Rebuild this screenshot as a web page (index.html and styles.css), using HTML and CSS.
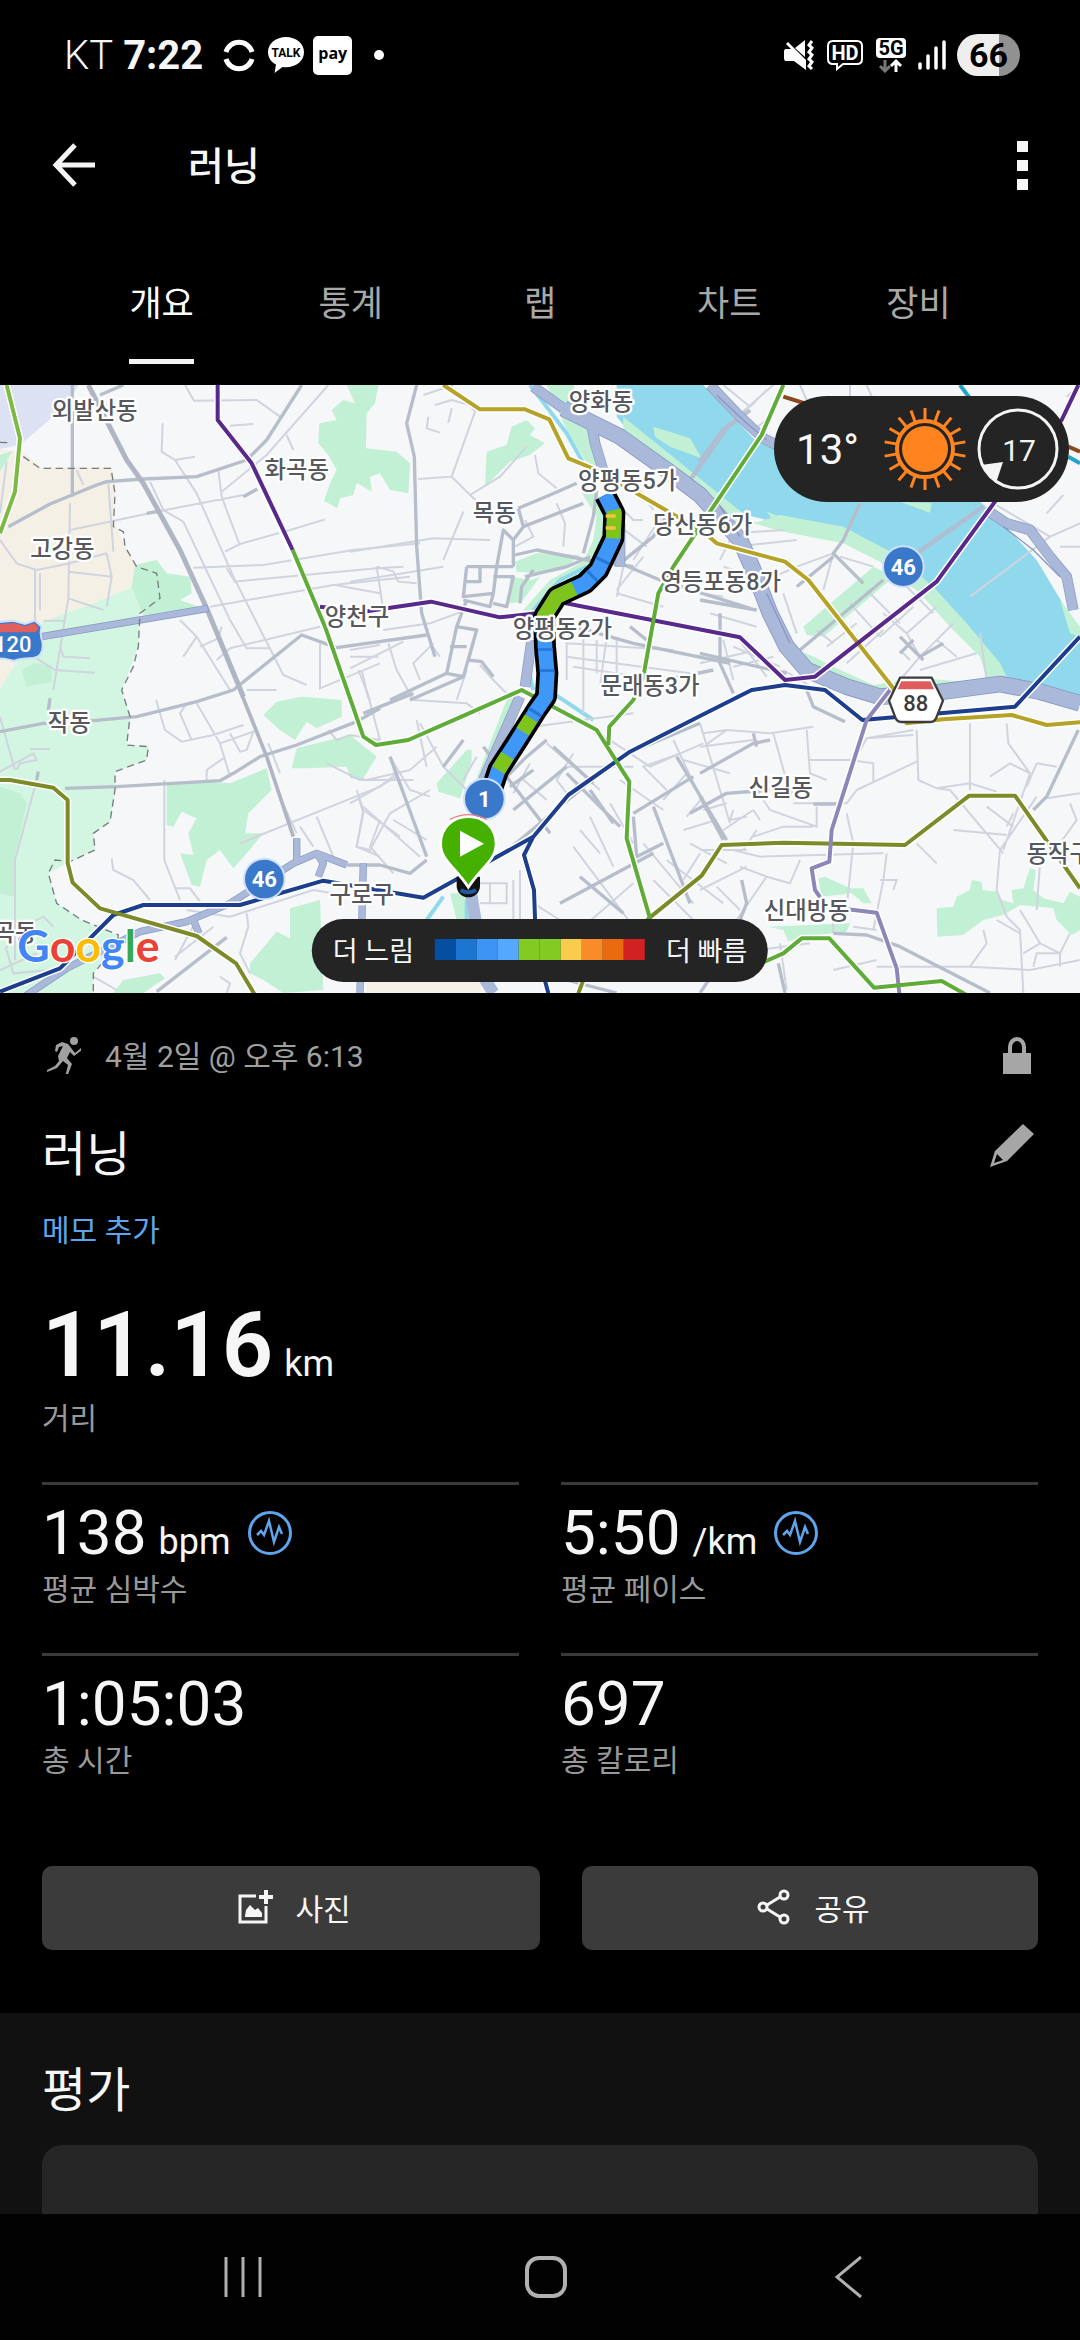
FILE: index.html
```html
<!DOCTYPE html>
<html lang="ko">
<head>
<meta charset="utf-8">
<meta name="viewport" content="width=device-width, initial-scale=1">
<title>러닝</title>
<link rel="stylesheet" href="styles.css">
</head>
<body>
<div class="status">
  <div class="status-left">
    <span class="carrier">KT</span>
    <span class="clock">7:22</span>
    <svg class="ic-sync" width="32" height="34" viewBox="0 0 32 34" fill="none" stroke="#fff" stroke-width="5"><path d="M3 14a13.500 13.500 0 0 1 26 0M3 21a13.500 13.500 0 0 0 26 0"/></svg>
    <svg class="ic-talk" width="38" height="38" viewBox="0 0 38 38"><path d="M19 1C9 1 1 7.500 1 16c0 5.500 3 10 8 12.500L7.500 37l8-6c12 1.500 21.500-5 21.500-15C37 7.500 29 1 19 1z" fill="#fff"/><text x="19" y="21" class="talk-text">TALK</text></svg>
    <span class="pay">pay</span>
    <span class="more-dot"></span>
  </div>
  <div class="status-right">
    <svg width="32" height="32" viewBox="0 0 32 32"><path d="M1 12l1-2h6L3 5l2-2 18 18v10L11 22H2l-1-2zM12 9l10-8v17z" fill="#fff"/><path d="M29 2l-3 4 3 3-3 4 3 3-3 4 3 3-3 4 3 3" fill="none" stroke="#fff" stroke-width="3"/></svg>
    <svg width="38" height="34" viewBox="0 0 38 34"><path d="M7 3h24q5 0 5 5v13q0 5-5 5H17l-6 5v-5H7q-5 0-5-5V8q0-5 5-5z" fill="none" stroke="#fff" stroke-width="2"/><text x="19" y="22" class="hd-text">HD</text></svg>
    <svg width="32" height="36" viewBox="0 0 32 36"><rect x="1" y="1" width="30" height="20" rx="4" fill="#fff"/><text x="16" y="18" class="net-text">5G</text><path d="M10 23v11M5 29l5 5 5-5" fill="none" stroke="#777" stroke-width="3"/><path d="M21 35V24M16 29l5-5 5 5" fill="none" stroke="#fff" stroke-width="3"/></svg>
    <svg width="28" height="32" viewBox="0 0 28 32" stroke="#fff" stroke-width="3.500" stroke-linecap="round"><path d="M2 25v4M10 17v12M18 9v20M26 3v26"/></svg>
    <span class="battery">66</span>
  </div>
</div>

<header class="appbar">
  <button class="icon-btn" aria-label="뒤로"><svg width="44" height="44" viewBox="0 0 44 44" fill="none" stroke="#f4f4f4" stroke-width="5"><path d="M43 22H5M23 2L4 22l19 20"/></svg></button>
  <h1>러닝</h1>
  <button class="icon-btn" aria-label="더보기"><svg width="11" height="49" viewBox="0 0 11 49" fill="#f6f6f6"><path d="M0 0h11v11H0zM0 19h11v11H0zM0 38h11v11H0z"/></svg></button>
</header>

<nav class="tabs">
  <button class="tab active"><span>개요</span></button>
  <button class="tab"><span>통계</span></button>
  <button class="tab"><span>랩</span></button>
  <button class="tab"><span>차트</span></button>
  <button class="tab"><span>장비</span></button>
</nav>

<section class="map">
  <svg class="map-art" viewBox="0 15 3240 1824">
    <rect y="15" width="3240" height="1824" fill="#f6f7f8"/>
    <!-- land use -->
    <path fill="#dce2f4" d="M0 15H235L200 75 60 195 0 207z"/>
    <path fill="#f5f0e6" d="M0 207L65 215 125 262H333L348 300 340 420 375 500 410 560 400 620 280 670 130 725 0 925z"/>
    <path fill="#f5f0e6" d="M1100 1839V1800H1450L1440 1839z"/>
    <path fill="#d2f6e1" d="M0 925L130 725 280 670 400 620 480 655 420 700 415 800 365 930 390 1010 380 1095 445 1100 440 1140 345 1175 345 1230 330 1325 280 1360 285 1410 210 1445 145 1480 170 1570 245 1620 350 1665V1690L280 1780V1839H0z"/>
    <g fill="#c2f0d5">
      <path d="M0 225L38 212 0 275zM405 555L470 540 500 580 570 590 575 640 540 660 600 682 430 705 395 620zM65 870L100 850 155 855V905L80 920z"/>
      <path d="M1040 15H1135L1125 70 1100 100 1098 205 1190 215 1230 250 1225 340 1170 330 1140 280 1110 290 1115 335 1070 308 1060 345 1020 355 1012 385 972 362 990 310 1010 270 985 225 955 190 958 130 1010 120 995 90 1030 60 1065 70z"/>
      <path d="M790 1005L830 965 905 950 1025 960V1010L950 1045 920 1025 885 1080 840 1050zM875 1165L890 1105 1050 1065 1130 1130 1090 1195 1050 1190 1040 1160 920 1165z"/>
      <path d="M500 1215L620 1205 690 1210 800 1165 815 1230 745 1300 735 1360 790 1360 740 1420 700 1465 660 1410 620 1440 600 1520 575 1515 540 1420 580 1425 565 1360 590 1315 545 1295 520 1340 500 1335z"/>
      <path d="M0 1220L60 1240 80 1270 45 1430V1550L0 1540zM750 1750L830 1655 870 1675V1585L960 1560 970 1830 850 1839 790 1800 750 1780zM340 1839L370 1800 480 1780 495 1795 430 1839z"/>
      <path d="M1310 1210L1400 1110H1415V1145L1380 1255 1315 1235zM1455 320L1460 215 1520 195 1535 140 1580 120 1605 145 1590 165 1635 190 1590 225 1530 245zM1545 545L1610 520 1740 525 1690 570 1630 580 1550 575zM1530 590L1595 600 1620 590 1565 665 1525 670z"/>
      <path d="M1740 330L1790 410 1780 480 1750 545 1650 600 1570 690 1605 700 1660 630 1790 555 1830 430 1790 340zM1640 15L1720 15 1760 130 1800 150 1790 260 1760 250 1700 150zM1520 960L1560 930 1470 1150 1420 1220zM1350 1540L1400 1540 1415 1620 1370 1620z"/>
      <path d="M2455 1495L2475 1490 2550 1525H2590L2615 1570H2590L2555 1540 2465 1550zM2305 1640L2550 1630 2540 1655 2400 1670 2365 1685 2350 1650zM2810 1585L2860 1580 2870 1550 2910 1530 2915 1500 2945 1505 2948 1530 2990 1535 3005 1560 3040 1570 3035 1530 3070 1525 3090 1465 3108 1470 3100 1530 3130 1555 3190 1570 3210 1535 3240 1550V1650L3215 1665 3170 1620 3160 1585 3060 1575 3010 1605 2950 1620 2890 1665 2812 1670z"/>
    </g>
    <path fill="#90d9ed" d="M1850 15H2110L2265 180 2330 210 2900 330 2980 400 3110 540 3200 690 3240 760V975L3150 935 3030 900 2960 830 2900 740 2770 600 2660 530 2530 455 2300 420 2195 395 2100 330 1900 170 1850 110z"/>
    <g fill="#c2f0d5">
      <path d="M2260 430L2340 405 2530 440 2680 520 2800 620 2900 730 3000 850 3025 900 2960 895 2940 830 2850 740 2760 640 2640 545 2530 490 2350 455z"/>
      <path d="M2300 395L2380 425 2330 435zM1960 140L2070 175 2105 235 2010 200 1965 170zM2700 365L2790 398 2795 370zM1870 110L2210 385 2270 430 2220 440 1870 170zM3180 660L3240 740V770L3210 760z"/>
      <path d="M2410 740L2620 560 2660 580 2670 600 2470 770 2420 765zM2410 815L2500 860 2620 915 2760 895 2900 905 2890 935 2600 930 2440 880z"/>
    </g>
    <g fill="none" stroke="#90d9ed" stroke-width="12"><path d="M1590 15L1640 80 1700 160 1750 250M1600 690L1680 600 1760 560M1600 930L1580 850M1660 940L1780 1020M1400 1560V1640M1330 1550L1280 1620"/></g>

    <!-- local streets -->
    <g fill="none" stroke="#cfd4df" stroke-width="6">
      <path d="M555 15L582 62 770 60 840 110M488 130L485 215 525 240 585 230M690 137L760 132M985 15L800 225 665 335M860 165L880 210M525 240L590 340 700 590 850 885 920 915M450 305L490 390 550 425 690 720 740 805H810M655 270L665 350 718 492M210 450L470 395 730 345M675 515L720 492 870 450 975 418M580 563L790 555 1060 510 1260 490M700 605L1130 565 1210 560M630 680L1000 615 1230 590M1005 615L1140 640M690 805L960 740M650 840L690 805M680 565L705 605M540 720L590 770 690 930M590 770L550 830M600 800L655 775 665 740M960 790V925L1140 850M1050 810L1140 795M1085 870L1105 955M20 245L0 400M0 480L50 550 110 570 210 550 320 520M105 570V720M210 370L205 655 160 930M205 575L335 590 320 520M335 590L320 680M205 655L310 690M130 722H195M325 310L340 515M120 580V690M180 800L190 830 270 835M110 835L165 870 285 878M230 270L250 315"/>
      <path d="M0 1010L45 1170M0 1175L100 1120 110 1140 60 1150 50 1170M90 1107H150M110 1200L45 1440V1740M468 960L495 1050 545 1085 640 1065 730 1035M590 970L660 1090 690 1190M560 970L540 1000 575 1080M660 1090L760 1055 740 1110 720 1115 690 1060M620 1200V1170L670 1135M805 1090L840 1180M740 930L830 930M1100 930L1140 1080 1050 1065 1010 1080 985 1050M980 1150L1080 1200 1240 1200M830 1230L890 1360M720 1390L1140 1220 1190 1180M493 1200V1440L540 1560M335 1435L340 1470 400 1500 450 1560M950 1310L1000 1430M1075 1250L1090 1300 1070 1400 1140 1430M1090 1290L1200 1370M900 1340L940 1400M530 1525H570L600 1565M560 1590L690 1610 940 1530 1000 1540M740 1600L745 1640 720 1720 750 1780M525 1730L640 1640M600 1600L525 1740M660 1790L690 1810 680 1839M15 1710L50 1650 130 1610 160 1640M20 1710L40 1780 150 1770M0 1770L110 1720M280 1790L350 1830"/>
      <path d="M1360 15L1270 45M1305 75L1355 60 1410 75 1425 95 1355 290 1255 297M1345 128L1355 85M1285 110L1280 145 1320 158M1355 290L1410 345 1500 290 1580 200M1410 345L1450 380M1605 225L1615 280 1670 325M1575 420L1600 470 1545 500M1670 370L1695 430 1690 500M1050 515L1300 475 1470 480M1390 395L1330 540M1050 605L1330 560M1130 560L1150 690M1130 560L1180 575 1195 605 1250 610M1150 750L1290 730 1400 690M1050 865L1210 785M1165 790L1190 870 1240 960M1300 790L1240 850 1260 900M1075 870L1110 960M1050 830H1135M1290 790L1320 830M1400 870L1370 960M1440 855L1480 900 1530 950M1700 790L2020 810M1700 830L2070 880M1720 860L1980 900M1700 770V900M1750 750V1000M1790 780V880M1820 770L1800 920M1850 780V900M1660 740L1640 800M1850 640L1990 680M1850 650L1870 560M1850 630L1930 530M1990 400L1900 540M1960 390L1920 330M1860 440L1940 500M1870 390L1900 420 1930 420"/>
      <path d="M1050 1190L1100 1200 1230 1170 1310 1100M1170 1130L1230 1230 1290 1250M1050 1270L1190 1190M1070 1230L1090 1290 1070 1400 1110 1410 1170 1300 1290 1230M1090 1280L1260 1430M1180 1320L1280 1380M1140 1320L1110 1400 1180 1480M1430 1130L1390 1200M1260 1030L1330 1160 1400 1230M1250 1020L1280 1160M1240 960L1400 970 1440 1000M1600 1040L1900 1000M1640 1090L1800 1230M1720 1120L1670 1200 1700 1240M1560 1190L1640 1260M1590 1150L1540 1240M1700 1160L1900 1160M1500 1430L1560 1390M1800 1060L1950 1160 2110 1090M2020 1080L2100 1250M2000 1230L1930 1160 2040 1120M1860 1200L1990 1290M2060 1180L1990 1260M2050 1140L2190 1180M2110 1250L2060 1310M1830 1270L1900 1390M1770 1310L1840 1460M1740 1350L1800 1420M1720 1400L1900 1640M1750 1640L1900 1510M1600 1570L1680 1620M1560 1470V1620M1540 1500V1640M1420 1510H1520V1570H1440M1470 1510V1570M1930 1390L2080 1570M2050 1350L2150 1320M2070 1390L2180 1450M2000 1440L2170 1570M1960 1500L2080 1620M2100 1420L2050 1500"/>
      <path d="M2100 1030L2190 1330M2110 1060L2180 1050 2310 1060 2440 1040M2180 1050L2110 1100M2100 1100L2260 1080M2420 1050L2430 1180 2480 1200M2430 1140H2550L2620 1150 2620 1210M2550 1140L2570 1130 2600 1075 2740 1065M2600 1075L2740 1050M2570 1230L2750 1145M2570 1230L2540 1270H2380M2750 1050L2755 1200 2810 1225 2910 1210 2990 1235M2910 1030V1230M3020 1030L3025 1090 3090 1180M2970 1190L3030 1150 3090 1180 3010 1410M3110 1150L3170 1160M3110 1150L3080 1220M3140 1255L3240 1240M3000 1410L2990 1530 3020 1610 3060 1650 3070 1839M3000 1410L3110 1250M2810 1225L2850 1230 3010 1420M2860 1350L3020 1365M2960 1280L3040 1340M3040 1300L3020 1340M3210 1270L3230 1320 3180 1390M2540 1300L2560 1390 2540 1580M2270 1230L2310 1290 2450 1340V1280M2320 1060L2370 1240 2430 1200M2180 1270L2110 1290M2200 1290L2190 1320 2240 1310M2170 1350L2260 1290M2260 1290L2280 1320M2230 1410L2270 1350M2260 1370L2350 1340H2440M2240 1410H2100M2200 1410L2280 1430 2650 1420M2660 1420L2650 1500 2620 1650M2640 1500H2690L2680 1530M2750 1390L2810 1450M2400 1440L2370 1510 2300 1490 2210 1620M2300 1490L2220 1460M2240 1460L2100 1530M2150 1520L2220 1590M2100 1770L2200 1720 2430 1690M2340 1690L2360 1830M2500 1770L2630 1740M2630 1760L2910 1760 3090 1770 3240 1740M2910 1760L2960 1690 2950 1650M3060 1590L3120 1690 3180 1720V1760M3120 1690L3070 1720M3180 1720H3110L3100 1760M3180 1720L3210 1660M3060 1660L2990 1620M3120 1450L3110 1590M2500 1620V1660M2560 1640L2630 1650"/>
      <path d="M2170 15L2250 80 2300 30M2200 120L2320 15M2260 150L2300 120M2400 15L2420 60M2550 15V60M2600 15L2620 60M2980 370L3150 470 3240 430M3150 470L2910 650M3180 500H3240M3190 345L3140 400M3240 15L3200 50M2160 540L2200 460 2350 450M2170 560L2290 600M2200 500L2390 480M2290 600L2260 640M2300 600L2390 560 2500 520M2390 760L2350 640M2520 530L2620 560M2350 870L2450 930M2500 520L2470 630M2450 750L2500 790M2500 710L2590 800M2550 670L2640 770M2600 630L2700 730M2480 800L2570 730M2540 850L2650 750M2700 600L2800 700M2740 680L2640 770M2720 760L2760 830M2760 830L2860 730M2760 830L2700 900M2700 810L2730 840M2810 780L2870 830M2760 870L2930 820M2940 760L2960 900M2650 700L2720 760 2810 680M2100 640L2170 650M2130 700L2270 740M2170 780L2200 900M2200 800L2340 860M2100 850L2270 810M2200 860L2320 830M2210 770L2300 890"/>
    </g>
    <!-- arterial roads -->
    <g fill="none" stroke="#b6bdcb" stroke-width="10" stroke-linejoin="round">
      <path d="M217 15V350M25 440L150 372M150 372L290 315 320 305 430 297 590 290 740 240 800 180 905 15M300 45L370 15M440 400L480 393M730 350L772 327M0 1055L130 1030 280 1022 410 1010 590 965 700 930 905 765 1010 803 1280 765M195 1225L350 1220 660 1202 700 1180 780 1130 890 1095 1070 1025 1140 985M470 1835L680 1672M1040 1455H1140L1230 1480 1280 1440M110 1200L115 1175M150 955L145 990"/>
      <path d="M1250 15L1220 130 1243 230 1250 500 1265 700 1305 830M1555 385L1650 345 1730 310M1570 440L1750 370M1555 385L1570 440 1540 480 1510 450 1490 560 1540 560M1490 560L1480 640M1540 480V560M1400 560H1500M1400 560L1390 650 1480 640 1470 680 1390 660M1400 605H1440V560M1480 590H1540L1520 680 1480 670M1400 660L1370 740 1430 750 1405 840M1370 740L1340 880 1390 890 1430 750M1340 880L1170 960M1390 890L1230 960M1350 800H1400M1405 840L1445 845 1480 890M1545 525L1610 510 1760 540 1900 560M1575 590L1700 560 1770 530M1600 570L1565 620 1560 670M1790 330L1780 410 1750 520M1860 550L1960 470 2010 390M1860 550L1980 600 2250 685M1690 730L1900 790 2190 850M2160 700L2160 850 2200 940M1890 740L1940 780M1900 920L2140 870"/>
      <path d="M1090 1000L1240 940M1170 1130L1280 1430M1330 1160L1390 1080M1450 1100L1620 1320 1650 1360M1500 1210L1580 1130 1640 1080M1500 1430L1740 1230 1860 1130 2100 1030M1540 1290L1700 1160M1530 1220L1600 1170M1660 1100L1780 1210M1700 1180L1860 1340M1770 1230L1840 1330M1680 1570L1960 1420M1740 1490L1870 1600M1900 1300L2080 1190M1900 1310L1910 1430 1990 1390M2030 1130L2180 1380M1960 1280L2070 1570M2070 1300L2180 1240 2310 1230M2100 1180L2260 1090 2310 1080M2100 1250L2170 1380M2420 930L2440 980 2535 1025M2260 1060L2270 1100M2440 1272H2510M2225 1500L2240 1570 2220 1620M2335 1750L2355 1839M2500 1660L2600 1665 2700 1700 2970 1839M3235 1050L3140 1250 3100 1290M1700 1800L1850 1839M2100 1839L2140 1780"/>
      <path d="M2580 370L2530 480 2500 520 2590 610M2390 620L2500 530M2400 810L2650 600M2700 770L2770 840M2740 780L2700 820M2760 830L2830 790M2100 660L2270 690M2100 820L2360 880"/>
    </g>
    <g fill="none" stroke="#afb5c3" stroke-width="18"><path d="M265 15L380 240 430 310 540 510 620 685 730 950" stroke-width="15"/><path d="M720 930L800 1130 880 1370" stroke-width="11"/></g>
    <path fill="none" stroke="#b7b6c8" stroke-width="14" opacity=".8" d="M2100 245L2170 150 2250 90M2750 520L2950 380M2190 130L2070 300"/>
    <!-- expressways -->
    <g fill="none" stroke="#8698c4" stroke-linejoin="round">
      <path stroke-width="50" d="M1690 85L1780 130 1860 170 2000 270 2100 345 2220 480 2260 570 2310 700 2360 800 2420 870 2540 920 2640 950 2790 940 3000 912 3120 935 3240 970"/>
      <path stroke-width="32" d="M1600 20L1690 85M1770 110L1785 190 1815 290M2130 15L2220 110 2290 175 2330 195M2960 390L3020 430 3090 450 3150 530 3200 590 3220 690M1860 430V560M1595 780L1575 920M1560 950L1490 1110 1450 1200"/>
      <path stroke-width="22" d="M125 770L625 685M60 1859L200 1765 420 1655 560 1625 690 1570 880 1450 950 1420 1040 1455M890 1375V1440M580 1620L597 1660M950 1420L970 1450 955 1490M1090 1450L1080 1839M1410 1530L1430 1630M1450 1800L1480 1839"/>
    </g>
    <g fill="none" stroke="#aab9d9" stroke-linejoin="round">
      <path stroke-width="45" d="M1690 85L1780 130 1860 170 2000 270 2100 345 2220 480 2260 570 2310 700 2360 800 2420 870 2540 920 2640 950 2790 940 3000 912 3120 935 3240 970"/>
      <path stroke-width="28" d="M1600 20L1690 85M1770 110L1785 190 1815 290M2130 15L2220 110 2290 175 2330 195M2960 390L3020 430 3090 450 3150 530 3200 590 3220 690M1860 430V560M1595 780L1575 920M1560 950L1490 1110 1450 1200"/>
      <path stroke-width="18" d="M127 770L623 685M60 1859L200 1765 420 1655 560 1625 690 1570 880 1450 950 1420 1040 1455M890 1375V1440M580 1620L597 1660M950 1420L970 1450 955 1490M1090 1450L1080 1839"/>
      <path stroke-width="36" d="M1410 1520L1430 1640M1450 1790L1480 1839"/>
    </g>
    <path fill="none" stroke="#8698c4" stroke-width="4" d="M2150 45L2240 130 2300 180M3010 440L3100 510 3180 590M2160 380L2220 470M2300 640L2370 790"/>
    <!-- city boundary -->
    <path fill="none" stroke="#777c80" stroke-width="4" stroke-dasharray="22 14" d="M0 187L30 188M70 230L120 265H333L345 340 340 440 370 455 375 500 410 560 470 580 480 655 420 700 415 800 400 860 365 930 390 1010 380 1095 445 1100 440 1140 345 1175 345 1230 330 1325 280 1360 285 1410 210 1445 165 1440 145 1480 170 1570 245 1620 355 1665 350 1700 280 1780V1839"/>

    <!-- transit lines: white casing, then colour -->
    <g class="casing">
      <path d="M20 15L60 175 45 335 0 460M653 15V120L755 250 975 740 1045 940 1090 1070 1128 1095 1225 1080 1400 1003 1565 930 1790 1050 1888 1205 1880 1375 1950 1615M2350 15L2285 165 2130 395 2020 560 1975 640 1930 890 1900 960 1828 1040 1825 1095M960 680L1090 695 1293 665 1500 712 1610 700 1690 668 2220 772 2355 900 2445 890 2810 605 2985 365 3185 120 3235 15M1330 15L1440 88H1575L1648 118 1705 235 1790 270 1910 340 2110 455 2150 490 2355 545 2425 600 2680 925 2720 1030 2830 1018 3035 1005 3140 1035 3240 1027M0 1835L180 1765 340 1605 430 1575H720L970 1502 1270 1553 1600 1370 1705 1245 1890 1115 2100 1008 2255 930 2355 915 2475 930 2587 1020 3045 980 3240 770M1600 1370L1572 1425 1602 1530 1608 1700 1645 1840M0 1200H30L160 1223 203 1260V1450L218 1508 300 1585 590 1668 708 1750 765 1845M1735 1840L1750 1800 1950 1612 2105 1487 2165 1395 2350 1388 2715 1395 2908 1247H3045L3240 1525M2670 930L2600 1020 2495 1350 2488 1445 2435 1465 2445 1530 2480 1580 2630 1598 2690 1765 2698 1840M2260 1760L2350 1720 2405 1675H2488L2622 1823 2825 1803 2900 1845"/>
    </g>
    <g class="line">
      <path stroke="#7dba45" d="M20 15L60 175 45 335 0 460"/>
      <path stroke="#8a4a1d" d="M2350 50L2430 75M3205 200L3240 215"/>
      <path stroke="#20a5c8" d="M2880 15L2910 55M3205 230L3240 250"/>
      <path stroke="#b5a226" d="M1330 15L1440 88H1575L1648 118 1705 235 1790 270 1910 340 2110 455 2150 490 2355 545 2425 600 2680 925 2720 1030 2830 1018 3035 1005 3140 1035 3240 1027"/>
      <path stroke="#58298a" d="M653 15V120L755 250 878 510M960 680L1090 695 1293 665 1500 712 1610 700 1690 668 2220 772 2355 900 2445 890 2810 605 2985 365 3185 120 3235 15"/>
      <path stroke="#1c3e8c" d="M0 1835L180 1765 340 1605 430 1575H720L970 1502 1270 1553 1600 1370 1705 1245 1890 1115 2100 1008 2255 930 2355 915 2475 930 2587 1020 3045 980 3240 770M1600 1370L1572 1425 1602 1530 1608 1700 1645 1840"/>
      <path stroke="#7d8a28" d="M0 1200H30L160 1223 203 1260V1450L218 1508 300 1585 590 1668 708 1750 765 1845M1735 1840L1750 1800 1950 1612 2105 1487 2165 1395 2350 1388 2715 1395 2908 1247H3045L3240 1525"/>
      <path stroke="#8d87b9" d="M2670 930L2600 1020 2495 1350 2488 1445 2435 1465 2445 1530 2480 1580 2630 1598 2690 1765 2698 1840"/>
      <path stroke="#5fac38" d="M878 510L975 740 1045 940 1090 1070 1128 1095 1225 1080 1400 1003 1565 930 1790 1050 1888 1205 1880 1375 1950 1615M2350 15L2285 165 2130 395 2020 560 1975 640 1930 890 1900 960 1828 1040 1825 1095M2260 1760L2350 1720 2405 1675H2488L2622 1823 2825 1803 2900 1845"/>
    </g>

    <!-- recorded track -->
    <g fill="none" stroke-linejoin="round">
      <path stroke="#000" stroke-width="66" d="M1815 345L1843 400 1840 475 1795 570 1755 610 1670 650 1632 710 1635 800 1642 880 1638 950 1610 990 1550 1085 1495 1170 1478 1220"/>
      <path stroke="#3f97f7" stroke-width="44" d="M1815 345L1843 400 1840 475 1795 570 1755 610 1670 650 1632 710 1635 800 1642 880 1638 950 1610 990 1550 1085 1495 1170 1478 1220"/>
      <path stroke="#7fc41c" stroke-width="44" d="M1841 390L1843 400 1840 475M1723 625L1670 650 1632 710 1633 745M1593 1015L1568 1055M1522 1127L1495 1170"/>
      <path stroke="#2576d6" stroke-width="44" d="M1810 538L1806 546M1780 585L1774 591M1637 805V812M1641 868V876M1607 992L1602 1000"/>
      <path stroke="#f2c63c" stroke-width="10" d="M1817 408H1847M1817 444H1847"/>
    </g>
    <path d="M1370 1490v27a35 35 0 0 0 70 0v-27z" fill="#111"/>
    <path d="M1382 1530q22 14 46 0" fill="none" stroke="#235a9c" stroke-width="12"/>

    <!-- district names -->
    <g class="place">
      <text x="284" y="116">외발산동</text><text x="890" y="294">화곡동</text><text x="187" y="532">고강동</text>
      <text x="1071" y="734">양천구</text><text x="1803" y="91">양화동</text><text x="1483" y="422">목동</text>
      <text x="1883" y="328">양평동5가</text><text x="2108" y="459">당산동6가</text><text x="2162" y="631">영등포동8가</text>
      <text x="1687" y="771">양평동2가</text><text x="1950" y="941">문래동3가</text><text x="208" y="1052">작동</text>
      <text x="1085" y="1570">구로구</text><text x="2342" y="1248">신길동</text><text x="2420" y="1616">신대방동</text>
      <text x="3176" y="1447">동작구</text><text x="45" y="1683">곡동</text>
    </g>

    <!-- road numbers -->
    <g class="badge">
      <circle cx="2710" cy="560" r="61"/><text x="2710" y="584">46</text>
      <circle cx="793" cy="1497" r="61"/><text x="793" y="1521">46</text>
      <circle cx="1453" cy="1257" r="61"/><text x="1453" y="1281">1</text>
    </g>
    <path d="M-15 727L40 722 75 732 105 722 125 740Q118 760 127 785 134 835 90 835 60 835 42 843 20 835-20 835z" fill="#3a78c9" stroke="#cfe0fb" stroke-width="6"/>
    <path d="M-15 734L40 729 75 739 103 730 116 742 108 757H-15z" fill="#e0605e"/>
    <text class="shield" x="38" y="815">120</text>
    <path d="M2700 893H2795L2829 962 2808 1015Q2803 1026 2792 1026H2703Q2692 1026 2687 1015L2667 962z" fill="#fff" stroke="#3c3c3c" stroke-width="7" stroke-linejoin="round"/>
    <path d="M2704 904H2791L2802 928H2693z" fill="#de5c5c"/>
    <text class="hex" x="2747" y="994">88</text>

    <!-- start pin -->
    <path d="M1405 1310c-48 0-83 34-83 82 0 50 47 72 83 130 36-58 83-80 83-130 0-48-35-82-83-82z" fill="#45b000" stroke="#fff" stroke-width="8"/>
    <path d="M1380 1352L1452 1391 1380 1430z" fill="#fff"/>
    <path d="M1350 1318q55-28 110 0" fill="none" stroke="#ee7b86" stroke-width="4"/>

    <text class="google" x="52" y="1746"><tspan fill="#4285f4">G</tspan><tspan fill="#ea4335">o</tspan><tspan fill="#fbbc05">o</tspan><tspan fill="#4285f4">g</tspan><tspan fill="#34a853">l</tspan><tspan fill="#ea4335">e</tspan></text>
  </svg>

  <div class="weather">
    <span class="temp">13°</span>
    <svg width="82" height="82" viewBox="-41 -41 82 82" stroke="#ff841f" fill="none"><circle r="23" fill="#ff841f" stroke="none"/><circle r="28" stroke-width="4"/>
      <g stroke-width="3"><path d="M0-28V-41M0 28V41"/><path d="M0-28V-41M0 28V41" transform="rotate(20)"/><path d="M0-28V-41M0 28V41" transform="rotate(40)"/><path d="M0-28V-41M0 28V41" transform="rotate(60)"/><path d="M0-28V-41M0 28V41" transform="rotate(80)"/><path d="M0-28V-41M0 28V41" transform="rotate(100)"/><path d="M0-28V-41M0 28V41" transform="rotate(120)"/><path d="M0-28V-41M0 28V41" transform="rotate(140)"/><path d="M0-28V-41M0 28V41" transform="rotate(160)"/></g></svg>
    <svg width="82" height="82" viewBox="-41 -41 82 82"><circle r="39" fill="none" stroke="#f4f4f4" stroke-width="3"/><path d="M-37 16L-15 13-22 34z" fill="#f4f4f4"/><text class="wind" x="1" y="12">17</text></svg>
  </div>

  <div class="legend">
    <span>더 느림</span>
    <div class="scale"><i class="s1"></i><i class="s2"></i><i class="s3"></i><i class="s4"></i><i class="s5"></i><i class="s5"></i><i class="s6"></i><i class="s7"></i><i class="s8"></i><i class="s9"></i></div>
    <span>더 빠름</span>
  </div>
</section>

<main class="summary">
  <div class="meta">
    <svg width="34" height="38" viewBox="0 0 34 38" fill="#a0a0a0"><circle cx="27" cy="5" r="4"/><path d="M21 8L15 6 9 9 8 15l2 1 2-5 4-1-5 10 1 5-4 5-8 4v2l10-4 6-7 5 4-3 12h2l5-13-5-6 3-6 4 4 8-6-1-2-6 5z"/></svg>
    <span class="date">4월 2일 @ 오후 6:13</span>
    <svg class="push" width="28" height="37" viewBox="0 0 28 37"><path d="M0 16h28v21H0z" fill="#a6a6a6"/><path d="M7 17V10a7 8 0 0 1 14 0v7" fill="none" stroke="#a6a6a6" stroke-width="4"/></svg>
  </div>
  <div class="title-row">
    <h2>러닝</h2>
    <button class="icon-btn edit" aria-label="이름 편집"><svg width="46" height="46" viewBox="0 0 46 46" fill="#a6a6a6"><path d="M34 2L45 12 18 39 1 45 6 29zM8 32L5 41 14 38z" fill-rule="evenodd"/></svg></button>
  </div>
  <a class="memo" href="#memo">메모 추가</a>

  <div class="distance"><b>11.16</b> <span class="unit">km</span></div>
  <div class="label">거리</div>

  <div class="stats">
    <div class="stat"><div class="value">138 <span class="unit">bpm</span><svg class="pulse" width="46" height="46" viewBox="0 0 46 46" fill="none" stroke="#5fa5ee"><circle cx="23" cy="23" r="20.500" stroke-width="3"/><path d="M10 25l4-4 3 4 5-14 5 21 5-15 3 7" stroke-width="2.500"/></svg></div><div class="label">평균 심박수</div></div>
    <div class="stat"><div class="value">5:50 <span class="unit">/km</span><svg class="pulse" width="46" height="46" viewBox="0 0 46 46" fill="none" stroke="#5fa5ee"><circle cx="23" cy="23" r="20.500" stroke-width="3"/><path d="M10 25l4-4 3 4 5-14 5 21 5-15 3 7" stroke-width="2.500"/></svg></div><div class="label">평균 페이스</div></div>
    <div class="stat"><div class="value">1:05:03</div><div class="label">총 시간</div></div>
    <div class="stat"><div class="value">697</div><div class="label">총 칼로리</div></div>
  </div>

  <div class="actions">
    <button class="action"><svg width="36" height="36" viewBox="0 0 36 36" fill="none" stroke="#f6f6f6"><path d="M19 7H3v26h26V17" stroke-width="3"/><path d="M29 1v14M22 8h14" stroke-width="4"/><path d="M8 27l1-6 4-5 5 5 3-2 4 5v4H8z" fill="#f6f6f6" stroke="none"/></svg>사진</button>
    <button class="action"><svg width="36" height="36" viewBox="0 0 36 36" fill="none" stroke="#f6f6f6" stroke-width="3"><circle cx="7" cy="18" r="4"/><circle cx="28" cy="6" r="4"/><circle cx="28" cy="30" r="4"/><path d="M11 16L24 8M11 20L24 28"/></svg>공유</button>
  </div>
</main>

<section class="rating">
  <h2>평가</h2>
  <div class="card"></div>
</section>

<nav class="sysnav">
  <button class="icon-btn" aria-label="최근 앱"><svg width="42" height="42" viewBox="0 0 42 42" stroke="#b0b0b0" stroke-width="3"><path d="M4 1v40M21 1v40M38 1v40"/></svg></button>
  <button class="icon-btn" aria-label="홈"><svg width="42" height="42" viewBox="0 0 42 42" fill="none" stroke="#b0b0b0" stroke-width="4"><rect x="2" y="2" width="38" height="38" rx="12"/></svg></button>
  <button class="icon-btn" aria-label="이전"><svg width="42" height="42" viewBox="0 0 42 42" fill="none" stroke="#b0b0b0" stroke-width="3"><path d="M33 1L9 21l24 20"/></svg></button>
</nav>
</body>
</html>
```
FILE: styles.css
```css
* { box-sizing: border-box; }
body {
  margin: 0;
  min-height: 100vh;
  display: flex;
  flex-direction: column;
  background: #000;
  color: #f6f6f6;
  font-family: Roboto, "Noto Sans CJK KR", sans-serif;
}
svg { display: block; flex: none; }
h1, h2 { margin: 0; font-weight: 500; }
button { margin: 0; padding: 0; border: 0; background: none; color: inherit; font: inherit; }
.icon-btn { display: flex; align-items: center; justify-content: center; }

/* status bar */
.status { height: 110px; padding: 0 60px 0 64px; display: flex; align-items: center; justify-content: space-between; }
.status-left, .status-right { display: flex; align-items: center; }
.carrier { font-size: 40px; font-weight: 300; }
.clock { margin-left: 10px; font-size: 40px; font-weight: 700; }
.ic-sync { margin-left: 20px; }
.ic-talk { margin-left: 12px; }
.talk-text { font: 700 12px Roboto, sans-serif; text-anchor: middle; }
.pay { width: 39px; height: 39px; margin-left: 8px; border-radius: 5px; background: #fff; color: #000; font: 700 16px/34px "Open Sans", sans-serif; text-align: center; }
.more-dot { width: 10px; height: 10px; margin-left: 22px; border-radius: 50%; background: #fff; }
.status-right { gap: 11px; }
.hd-text { font: 700 20px Roboto, sans-serif; fill: #fff; text-anchor: middle; }
.net-text { font: 700 20px Roboto, sans-serif; text-anchor: middle; }
.battery { width: 63px; height: 42px; border-radius: 21px; background: linear-gradient(90deg, #eee 66%, #919191 66%); color: #000; font-size: 34px; font-weight: 700; line-height: 42px; text-align: center; }

/* app bar and tabs */
.appbar { height: 110px; padding: 0 52px; display: flex; align-items: center; }
.appbar h1 { flex: 1; margin-left: 92px; padding-bottom: 4px; font-size: 39px; }
.tabs { padding: 61px 67px 21px; display: grid; grid-template-columns: repeat(5, 1fr); justify-items: center; }
.tab { padding-bottom: 30px; border-bottom: 5px solid transparent; color: #a8a8a8; font-size: 35px; line-height: 48px; }
.tab span { display: block; }
.tab.active { border-color: #f4f4f4; color: #fff; }

/* map */
.map { position: relative; overflow: hidden; }
.map-art { width: 100%; height: auto; }
.casing { fill: none; stroke: #fff; stroke-width: 21; stroke-linejoin: round; }
.line { fill: none; stroke-width: 12; stroke-linejoin: round; }
.place { font: 500 70px Roboto, "Noto Sans CJK KR", sans-serif; fill: #55585e; stroke: #fff; stroke-width: 14; stroke-linejoin: round; paint-order: stroke; text-anchor: middle; }
.badge circle { fill: #3a78c9; stroke: #cfe0fb; stroke-width: 6; }
.badge text { font: 700 66px Roboto, sans-serif; fill: #fff; text-anchor: middle; }
.shield { font: 500 66px Roboto, sans-serif; fill: #fff; text-anchor: middle; }
.hex { font: 500 66px Roboto, sans-serif; fill: #3c3c3c; text-anchor: middle; }
.google { font: 700 134px Lato, sans-serif; stroke: #fff; stroke-width: 8; paint-order: stroke; }
.weather { position: absolute; top: 11px; right: 11px; height: 106px; padding: 0 10px 0 22px; border-radius: 53px; background: #242424; display: flex; align-items: center; }
.temp { margin-right: 25px; font-size: 42px; }
.weather svg + svg { margin-left: 11px; }
.wind { font: 400 30px Roboto, sans-serif; fill: #f4f4f4; text-anchor: middle; }
.legend { position: absolute; bottom: 11px; left: 50%; transform: translateX(-50%); height: 63px; padding: 0 21px 2px; border-radius: 32px; background: #242424; display: flex; align-items: center; gap: 21px; font-size: 27px; white-space: nowrap; }
.scale { display: flex; height: 21px; }
.scale i { width: 21px; }
.s1 { background: #044fa1; }
.s2 { background: #1b75d1; }
.s3 { background: #3d94f4; }
.s4 { background: #55a8ff; }
.s5 { background: #82cb22; }
.s6 { background: #f9cc4e; }
.s7 { background: #f98c29; }
.s8 { background: #e96a0f; }
.s9 { background: #d02222; }

/* summary */
.summary { padding: 38px 42px 63px; }
.meta { height: 48px; padding: 0 7px 0 5px; display: flex; align-items: center; color: #a0a0a0; }
.date { margin-left: 24px; padding-bottom: 2px; font-size: 30px; }
.push { margin-left: auto; }
.title-row { height: 72px; margin-top: 40px; padding-right: 3px; display: flex; align-items: center; justify-content: space-between; }
h2 { font-size: 48px; line-height: 72px; font-weight: 400; }
.edit { align-self: flex-start; padding-top: 3px; }
.memo { display: block; width: max-content; margin-top: 18px; color: #5fa5ee; font-size: 30px; line-height: 44px; text-decoration: none; }
.distance { margin-top: 48px; font-size: 90px; line-height: 90px; height: 90px; display: flex; align-items: baseline; gap: 11px; }
.distance b { font-weight: 600; }
.unit { font-size: 36px; line-height: 44px; }
.label { color: #999; font-size: 30px; line-height: 44px; }
.distance + .label { margin-top: 6px; }
.stats { margin-top: 41px; display: grid; grid-template-columns: 1fr 1fr; gap: 41px 42px; }
.stat { border-top: 3px solid #3a3a3a; padding-top: 15px; }
.value { height: 66px; margin-bottom: 2px; font-size: 62px; line-height: 66px; display: flex; align-items: baseline; gap: 12px; }
.pulse { align-self: center; margin-left: 4px; }
.actions { margin-top: 83px; display: grid; grid-template-columns: 498fr 456fr; gap: 42px; }
.action { height: 84px; padding: 0 0 2px 6px; border-radius: 10px; background: #3b3b3b; display: flex; align-items: center; justify-content: center; gap: 22px; font-size: 30px; }

/* rating */
.rating { flex: 1; padding: 42px 42px 0; background: #111; display: flex; flex-direction: column; }
.card { flex: 1; min-height: 69px; margin-top: 18px; border-radius: 20px 20px 0 0; background: #262626; }

/* system navigation */
.sysnav { height: 126px; padding: 0 80px 0 92px; display: grid; grid-template-columns: repeat(3, 1fr); background: #020202; }
```
